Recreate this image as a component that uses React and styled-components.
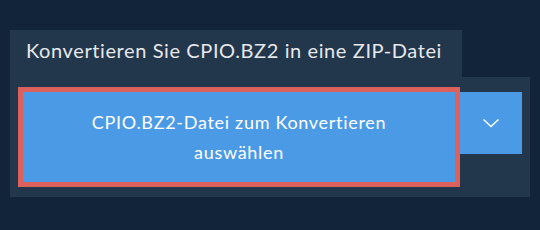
import React from "react";
import styled, { createGlobalStyle } from "styled-components";

const GlobalStyle = createGlobalStyle`
  html, body {
    margin: 0;
    padding: 0;
    background: #11243a;
  }
  body {
    font-family: Lato, "Open Sans", sans-serif;
  }
`;

const Page = styled.div`
  width: 540px;
  height: 230px;
  padding: 30px 10px 0;
  box-sizing: border-box;
  background: #11243a;
`;

const TitleTab = styled.div`
  width: 452px;
  height: 47px;
  box-sizing: border-box;
  padding: 8px 16px 0;
  background: #22364c;
  color: #e6e8ea;
  font-size: 20px;
  letter-spacing: 0.6px;
  line-height: 24px;
  white-space: nowrap;
`;

const Panel = styled.div`
  width: 520px;
  box-sizing: border-box;
  padding: 10px 8px;
  background: #22364c;
`;

const Row = styled.div`
  display: flex;
  align-items: flex-start;
`;

const MainButton = styled.button`
  width: 442px;
  height: 100px;
  box-sizing: border-box;
  border: 5px solid #dc605c;
  background: #4b9ae6;
  color: #ffffff;
  font-family: Lato, "Open Sans", sans-serif;
  font-size: 18px;
  letter-spacing: 0.7px;
  line-height: 30px;
  padding: 0 50px;
  text-align: center;
  cursor: pointer;
`;

const DropButton = styled.button`
  width: 62px;
  height: 62px;
  margin-top: 5px;
  border: none;
  padding: 0;
  background: #4b9ae6;
  display: flex;
  align-items: center;
  justify-content: center;
  cursor: pointer;
`;

export default function App() {
  return (
    <Page>
      <GlobalStyle />
      <TitleTab>Konvertieren Sie CPIO.BZ2 in eine ZIP-Datei</TitleTab>
      <Panel>
        <Row>
          <MainButton>CPIO.BZ2-Datei zum Konvertieren auswählen</MainButton>
          <DropButton aria-label="Weitere Optionen">
            <svg width="18" height="10" viewBox="0 0 18 10" fill="none">
              <path d="M1.5 1.5 L9 8.5 L16.5 1.5" stroke="#ffffff" strokeWidth="1.5" />
            </svg>
          </DropButton>
        </Row>
      </Panel>
    </Page>
  );
}
